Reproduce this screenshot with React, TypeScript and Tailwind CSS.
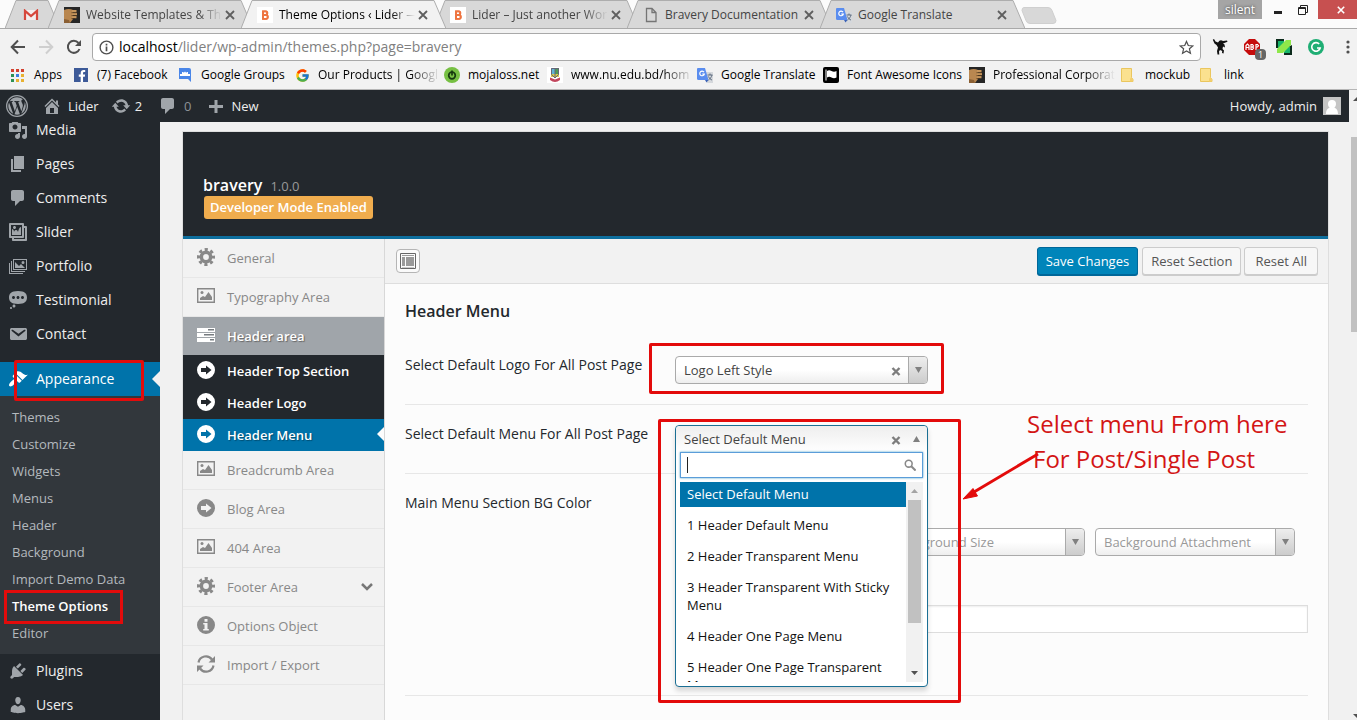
import type { ReactNode } from "react";
import { FaWordpressSimple, FaFacebookF } from "react-icons/fa";
import { FcGoogle } from "react-icons/fc";

const sans = "font-['Open_Sans','Noto_Sans',sans-serif]";

const dash = {
  media: "M13 11V4c0-.55-.45-1-1-1h-1.67L9 1H5L3.67 3H2c-.55 0-1 .45-1 1v7c0 .55.45 1 1 1h10c.55 0 1-.45 1-1zM7 4.5c1.38 0 2.5 1.12 2.5 2.5S8.38 9.5 7 9.5 4.5 8.38 4.5 7 5.62 4.5 7 4.5zM14 6h5v10.5c0 1.38-1.12 2.5-2.5 2.5S14 17.88 14 16.5s1.12-2.5 2.5-2.5c.17 0 .34.02.5.05V9h-3V6zm-4 8.05V13h2v3.5c0 1.38-1.12 2.5-2.5 2.5S7 17.88 7 16.5 8.12 14 9.5 14c.17 0 .34.02.5.05z",
  page: "M6 15V2h10v13H6zm-1 1h8v2H3V5h2v11z",
  comments: "M5 2h9c1.1 0 2 .9 2 2v7c0 1.1-.9 2-2 2h-2l-5 5v-5H5c-1.1 0-2-.9-2-2V4c0-1.1.9-2 2-2z",
  gallery: "M16 4h1.96c.57 0 1.04.47 1.04 1.04v12.92c0 .57-.47 1.04-1.04 1.04H5.04C4.47 19 4 18.53 4 17.96V16H2.04C1.47 16 1 15.53 1 14.96V2.04C1 1.47 1.47 1 2.04 1h12.92c.57 0 1.04.47 1.04 1.04V4zM3 14h11V3H3v11zm5-8.5C8 4.67 7.33 4 6.5 4S5 4.67 5 5.5 5.67 7 6.5 7 8 6.33 8 5.5zm2 4.5s1-5 3-5v8H4V7c2 0 2 3 2 3s.33-2 2-2 2 2 2 2zm7 7V6h-1v8.96c0 .57-.47 1.04-1.04 1.04H6v1h11z",
  portfolio: "M5 3h14v11H5zM6 4v9h12V4zM7 12V6l4 4 2-2 4 4zM13.5 6.5a1.5 1.5 0 1 0 3 0a1.5 1.5 0 1 0-3 0zM3 5h1v10h13v1H3zM1 7h1v10h13v1H1z",
  status: "M10 1c7 0 9 2.91 9 6.5S17 14 10 14s-9-2.91-9-6.5S3 1 10 1zM5.5 9C6.33 9 7 8.33 7 7.5S6.33 6 5.5 6 4 6.67 4 7.5 4.67 9 5.5 9zM10 9c.83 0 1.5-.67 1.5-1.5S10.83 6 10 6s-1.5.67-1.5 1.5S9.17 9 10 9zm4.5 0c.83 0 1.5-.67 1.5-1.5S15.33 6 14.5 6 13 6.67 13 7.5 13.67 9 14.5 9zM6 14.5c.83 0 1.5.67 1.5 1.5s-.67 1.5-1.5 1.5-1.5-.67-1.5-1.5.67-1.5 1.5-1.5zm-3 2.5c.55 0 1 .45 1 1s-.45 1-1 1-1-.45-1-1 .45-1 1-1z",
  email: "M3.87 4h13.25C18.37 4 19 4.59 19 5.79v8.42c0 1.19-.63 1.79-1.88 1.79H3.87c-1.25 0-1.88-.6-1.88-1.79V5.79c0-1.2.63-1.79 1.88-1.79zm6.62 8.6l6.74-5.53c.24-.2.43-.66.13-1.07-.29-.41-.82-.42-1.17-.17l-5.7 3.86L4.8 5.83c-.35-.25-.88-.24-1.17.17-.3.41-.11.87.13 1.07z",
  appearance: "M14.48 11.06L7.41 3.99l1.5-1.5c.5-.56 2.3-.47 3.51.32 1.21.8 1.43 1.28 2.91 2.1 1.18.64 2.45 1.26 4.45.85zm-.71.71L6.7 4.7 4.93 6.47c-.39.39-.39 1.02 0 1.41l1.06 1.06c.39.39.39 1.03 0 1.42-.6.6-1.43 1.11-2.21 1.69-.35.26-.7.53-1.01.84C1.43 14.23.4 16.08 1.4 17.07c.99 1 2.84-.03 4.18-1.36.31-.31.58-.66.85-1.02.57-.78 1.08-1.61 1.69-2.21.39-.39 1.02-.39 1.41 0l1.06 1.06c.39.39 1.02.39 1.41 0z",
  plugins: "M13.11 4.36L9.87 7.6 8 5.73l3.24-3.24c.35-.34 1.05-.2 1.56.32.52.51.66 1.21.31 1.55zm-8 1.77l.91-1.12 9.01 9.01-1.19.84c-.71.71-2.63 1.16-3.82 1.16H6.14L4.9 17.26c-.59.59-1.54.59-2.12 0-.59-.58-.59-1.53 0-2.12l1.24-1.24v-3.88c0-1.13.4-3.19 1.09-3.89zm7.26 3.97l3.24-3.24c.34-.35 1.04-.21 1.55.31.52.51.66 1.21.31 1.55l-3.24 3.25z",
  users: "M10 9.25c-2.27 0-2.73-3.44-2.73-3.44C7 4.02 7.82 2 9.97 2c2.16 0 2.98 2.02 2.71 3.81 0 0-.41 3.44-2.68 3.44zm0 2.57L12.72 10c2.39 0 4.52 2.33 4.52 4.53v2.49s-3.65 1.13-7.24 1.13c-3.65 0-7.24-1.13-7.24-1.13v-2.49c0-2.25 1.94-4.48 4.47-4.48z",
  home: "M16 8.5l1.53 1.53-1.06 1.06L10 4.6l-6.47 6.49-1.06-1.06L10 2.5l4 4v-2h2v4zm-6-2.46l6 5.99V18H4v-5.97zM12 17v-5H8v5h4z",
  update: "M10.2 3.28c3.53 0 6.43 2.61 6.92 6h2.08l-3.5 4-3.5-4h2.32c-.45-1.97-2.21-3.45-4.32-3.45-1.45 0-2.73.71-3.54 1.78L4.95 5.66C6.23 4.2 8.11 3.28 10.2 3.28zm-.4 13.44c-3.52 0-6.43-2.61-6.92-6H.8l3.5-4c1.17 1.33 2.33 2.67 3.5 4H5.48c.45 1.97 2.21 3.45 4.32 3.45 1.45 0 2.73-.71 3.54-1.78l1.71 1.95c-1.28 1.46-3.15 2.38-5.25 2.38z",
  plus: "M17 9v3h-5.500v5h-3v-5H3V9h5.500V4h3v5z",
};

function Dash({ d, className = "" }: { d: string; className?: string }) {
  return (
    <svg viewBox="0 0 20 20" className={`size-5 shrink-0 fill-current ${className}`} aria-hidden="true">
      <path fillRule="evenodd" d={d} />
    </svg>
  );
}

/* ---------- favicons ---------- */

function ThumbIcon() {
  return (
    <svg viewBox="0 0 16 16" className="size-4 shrink-0" aria-hidden="true">
      <path fill="#262626" d="M0 0h16v16H0z" />
      <path fill="#b98750" d="M0 3q5-2 9 0v9l-3 4H0z" />
      <path fill="#c6955c" d="M8 3h4.500v2.500H8zM8 6h5v2.300H8zM8 9h4.500v2.200H8z" />
      <path fill="#8a5f33" d="M0 12l5 1 1 3H0z" />
      <path stroke="#4b3117" strokeWidth=".7" fill="none" d="M7.500 5.700H13M7.500 8.600H13M7.500 11.500H11" />
    </svg>
  );
}

function BraveryIcon() {
  return (
    <svg viewBox="0 0 16 16" className="size-4 shrink-0" aria-hidden="true">
      <path fill="#fff" d="M0 0h16v16H0z" />
      <path fill="none" stroke="#ee7440" strokeWidth="1.800" d="M6 8h3.500M6 4.300h3a1.500 1.500 0 0 1 1.300 1.800Q10 8 9 8q1.800 0 1.700 2T9 11.900H6zV12" />
      <path fill="none" stroke="#ee7440" strokeWidth="1.800" d="M6 4.300h2.500q1.800 0 1.800 1.800T8.500 8H6h3q1.800 0 1.800 2T9 11.800H6z" />
    </svg>
  );
}

function PageIcon() {
  return (
    <svg viewBox="0 0 16 16" className="size-4 shrink-0" fill="none" stroke="#757575" strokeWidth="1.300" aria-hidden="true">
      <path d="M3.500 1.500h5.500l4 4v9H3.500zM9 1.500v4h4" />
    </svg>
  );
}

function TranslateIcon() {
  return (
    <svg viewBox="0 0 16 16" className="size-4 shrink-0" aria-hidden="true">
      <path fill="#d5d8dc" d="M8 5h8v11h-6z" />
      <path fill="#5a8def" d="M1 1h7l3.500 12H1.500A1.500 1.500 0 0 1 0 11.500V2a1 1 0 0 1 1-1z" />
      <path fill="#3a62b8" d="M8 13h3.500L9.500 15.500z" />
      <path fill="none" stroke="#fff" strokeWidth="1.200" d="M7 5.200A2.300 2.300 0 1 0 7.300 7H5.200" />
      <path fill="none" stroke="#5f6d80" d="M10.500 8h5M13 6.500V8m2 0c-.5 2-2 4-3.500 5M11.500 9.500c1 2 2 3 3.500 3.500" />
    </svg>
  );
}

function GmailIcon() {
  return (
    <svg viewBox="0 0 16 12" className="h-3 w-4" aria-hidden="true">
      <path fill="#f3eeee" d="M1 1h14v10H1z" />
      <path fill="none" stroke="#d6473c" strokeWidth="2.200" d="M2 11V1.800L8 7l6-5.200V11" />
    </svg>
  );
}

/* ---------- browser chrome ---------- */

function TabShape({ active, small }: { active?: boolean; small?: boolean }) {
  return (
    <svg className={small ? "absolute left-0 top-0 h-7 w-14" : "absolute left-0 top-0 h-7 w-[205px]"} aria-hidden="true">
      <path
        d={small ? "M0 28.500L11 .5H43L55 28.500" : "M0 28.500L11 .5H193L205 28.500"}
        fill={active ? "#f2f2f2" : "#d8d8d8"}
        stroke="#adadad"
      />
    </svg>
  );
}

function Tab({ icon, title, active, faded }: { icon: ReactNode; title: string; active?: boolean; faded?: boolean }) {
  return (
    <div className={`relative h-7 w-[193px] shrink-0 ${active ? "z-10" : ""}`}>
      <TabShape active={active} />
      <div className={`relative flex h-full w-[193px] items-center pl-4 pt-0.5 text-xs ${active ? "text-black" : "text-[#444]"}`}>
        {icon}
        <span
          className={`ml-1.5 w-[136px] whitespace-nowrap ${
            faded ? "overflow-hidden [mask-image:linear-gradient(to_right,#000_112px,transparent)]" : ""
          }`}
        >
          {title}
        </span>
        <button aria-label="Close tab" className="flex size-4 items-center justify-center">
          <svg viewBox="0 0 10 10" className="size-2.5" stroke="#5f5f5f" strokeWidth="1.800" aria-hidden="true">
            <path d="M1 1l8 8M9 1L1 9" />
          </svg>
        </button>
      </div>
    </div>
  );
}

function TabStrip() {
  return (
    <div className="flex h-[29px] shrink-0 items-start border-b border-[#a9a9a9] bg-[#fbfbfb] pl-[5px]">
      <div className="relative h-7 w-[43px] shrink-0">
        <TabShape small />
        <div className="relative flex h-full w-[52px] items-center justify-center pt-0.5">
          <GmailIcon />
        </div>
      </div>
      <Tab icon={<ThumbIcon />} title="Website Templates & Th" faded />
      <Tab icon={<BraveryIcon />} title="Theme Options ‹ Lider —" active faded />
      <Tab icon={<BraveryIcon />} title="Lider – Just another Wor" faded />
      <Tab icon={<PageIcon />} title="Bravery Documentation" />
      <Tab icon={<TranslateIcon />} title="Google Translate" />
      <button aria-label="New tab" className="ml-2 mt-[7px]">
        <svg viewBox="0 0 36 17" className="h-[17px] w-9" aria-hidden="true">
          <path d="M3 .5h24q3 0 4 3l4 10q0 3-3 3H9q-3 0-4-3L1 3.500Q1 .5 3 .5z" fill="#d8d8d8" stroke="#cfcfcf" />
        </svg>
      </button>
      <div className="ml-auto flex h-[19px] items-stretch">
        <span className="flex w-11 items-center justify-center bg-[#a5a5a5] text-xs text-white [text-shadow:0_0_3px_#333]">silent</span>
        <button aria-label="Minimize" className="flex w-8 items-center justify-center">
          <span className="mt-1.5 h-[3px] w-2 bg-[#222]" />
        </button>
        <button aria-label="Restore" className="flex w-6 items-center justify-start">
          <svg viewBox="0 0 10 10" className="ml-1 size-2.5" fill="none" stroke="#222" aria-hidden="true">
            <path d="M2.500 2V.5h7v7H8M.5 2.500h7v7h-7zM.5 3.500h7" />
          </svg>
        </button>
        <button aria-label="Close window" className="flex w-[39px] items-center justify-center bg-[#c75050]">
          <svg viewBox="0 0 10 10" className="ml-1.5 size-2" stroke="#fff" strokeWidth="2" aria-hidden="true">
            <path d="M1 1l8 8M9 1L1 9" />
          </svg>
        </button>
      </div>
    </div>
  );
}

function Toolbar() {
  return (
    <div className="flex h-8 shrink-0 items-center bg-[#f2f2f2] pt-1">
      <div className="flex w-[92px] items-center gap-3 pl-2.5">
        <button aria-label="Back">
          <svg viewBox="0 0 16 16" className="size-4" fill="none" stroke="#4f4f4f" strokeWidth="2" aria-hidden="true">
            <path d="M15 8H2M8 1.500L1.700 8 8 14.500" />
          </svg>
        </button>
        <button aria-label="Forward">
          <svg viewBox="0 0 16 16" className="size-4" fill="none" stroke="#cfcfcf" strokeWidth="2" aria-hidden="true">
            <path d="M1 8h13M8 1.500L14.300 8 8 14.500" />
          </svg>
        </button>
        <button aria-label="Reload">
          <svg viewBox="0 0 16 16" className="size-4" fill="none" stroke="#4f4f4f" strokeWidth="2" aria-hidden="true">
            <path d="M13.500 10A6 6 0 1 1 12.500 4" />
            <path d="M15 1v6H9z" fill="#4f4f4f" stroke="none" />
          </svg>
        </button>
      </div>
      <div className="flex h-7 flex-1 items-center rounded-sm border border-[#a9a9a9] bg-white px-1.5">
        <svg viewBox="0 0 16 16" className="size-[15px]" fill="none" stroke="#4f4f4f" strokeWidth="1.500" aria-hidden="true">
          <circle cx="8" cy="8" r="6.800" />
          <path d="M8 7v5M8 4v1.800" strokeWidth="1.800" />
        </svg>
        <div className="ml-[5px] flex-1 text-sm text-[#808080]">
          <span className="text-black">localhost</span>/lider/wp-admin/themes.php?page=bravery
        </div>
        <button aria-label="Bookmark this page">
          <svg viewBox="0 0 16 16" className="size-[15px]" fill="none" stroke="#4f4f4f" strokeWidth="1.300" aria-hidden="true">
            <path d="M8 1.500l1.900 4.400 4.800.4-3.600 3.100 1.100 4.700L8 11.600l-4.200 2.500 1.100-4.700L1.300 6.300l4.800-.4z" />
          </svg>
        </button>
      </div>
      <div className="flex w-[156px] items-center gap-4 pl-[11px]">
        <svg viewBox="0 0 16 16" className="size-4 shrink-0" aria-hidden="true">
          <path fill="#111" d="M2 0l1.500 2.500L6 3.500Q8 0 11 2l4-.5.5 1.300-4.500 1.700 1.500 1 .5 3-2-1-.5 2.500 1.500 1.500-.5 3-1.500-.5.2-2L8 11l-1 1.500.3 3H5.500L5 12l1-3.500L4.500 6 2.500 4.500.8.800z" />
        </svg>
        <span className="relative size-4 shrink-0">
          <svg viewBox="0 0 16 16" className="size-4" aria-hidden="true">
            <path fill="#c50b0b" d="M5 0h6l5 5v6l-5 5H5l-5-5V5z" />
            <path fill="none" stroke="#fff" strokeWidth="1.200" d="M2 11V6.500L3.500 5 5 6.500V11M2 8.500h3M7 5v5.500h1.500L9.500 9 8.500 8 9.500 7 8.500 5.500H7M7 8h2M12 11V5.500h1.500l1 1.300-1 1.200H12" />
          </svg>
          <span className="absolute left-[11px] top-2.5 flex h-[11px] w-[11px] items-center justify-center rounded-sm bg-[#666] text-[9px] text-white">1</span>
        </span>
        <svg viewBox="0 0 16 16" className="size-4 shrink-0" aria-hidden="true">
          <path fill="#0c2b1c" d="M0 0h8v4L4 9H0zM8 16h8V6l-4 2-4 6z" />
          <path fill="#17b56a" d="M2 2h6v7H2zM9 8h5v6H8z" />
          <path fill="#8fe84a" d="M10 1h5v5L7 14H1v-4z" />
        </svg>
        <svg viewBox="0 0 16 16" className="size-4 shrink-0" aria-hidden="true">
          <circle cx="8" cy="8" r="8" fill="#1fae74" />
          <path fill="none" stroke="#fff" strokeWidth="1.600" d="M11.200 5A4.300 4.300 0 1 0 12.200 9H9" />
        </svg>
        <button aria-label="Menu" className="shrink-0">
          <svg viewBox="0 0 16 16" className="size-4 fill-[#4f4f4f]" aria-hidden="true">
            <circle cx="8" cy="3" r="1.600" />
            <circle cx="8" cy="8" r="1.600" />
            <circle cx="8" cy="13" r="1.600" />
          </svg>
        </button>
      </div>
    </div>
  );
}

function FolderIcon() {
  return (
    <svg viewBox="0 0 16 16" className="size-4 shrink-0" aria-hidden="true">
      <path d="M.5 1.500h10v9l1.500 2v2H.5z" fill="#fbe18f" stroke="#eac65e" />
      <path d="M9 14.500v-3l1.500-1.500 1.500 2.500v2z" fill="#f3cf6d" />
    </svg>
  );
}

const bookmarks: { title: string; icon: ReactNode; faded?: boolean }[] = [
  {
    title: "Apps",
    icon: (
      <svg viewBox="0 0 14 14" className="mr-px size-3.5 shrink-0" aria-hidden="true">
        <path fill="#d3412f" d="M0 1h3v3H0zM5 1h3v3H5zM10 1h3v3h-3z" />
        <path fill="#2d9154" d="M0 6h3v3H0zM0 11h3v3H0z" />
        <path fill="#3d7fe0" d="M5 6h3v3H5z" />
        <path fill="#e8b130" d="M10 6h3v3h-3zM5 11h3v3H5zM10 11h3v3h-3z" />
      </svg>
    ),
  },
  {
    title: "(7) Facebook",
    icon: (
      <span className="mr-px flex size-3.5 shrink-0 items-end justify-end bg-[#3d5a98] text-white">
        <FaFacebookF className="size-3" />
      </span>
    ),
  },
  {
    title: "Google Groups",
    icon: (
      <svg viewBox="2 0 14 16" className="h-4 w-3.5 shrink-0" aria-hidden="true">
        <path fill="#4a86e8" d="M2 1h10a2 2 0 0 1 2 2v12l-3-3H2z" />
        <path fill="#fff" d="M3 9V7h2V5h1.500v1L8 4.500 9.500 6V5H11v2h2v2z" />
      </svg>
    ),
  },
  { title: "Our Products | Googl", icon: <FcGoogle className="size-[15px] shrink-0" />, faded: true },
  {
    title: "mojaloss.net",
    icon: (
      <svg viewBox="0 0 16 16" className="size-4 shrink-0" aria-hidden="true">
        <circle cx="8" cy="8" r="8" fill="#77c043" />
        <circle cx="8" cy="8.500" r="3.300" fill="none" stroke="#173a10" strokeWidth="1.700" />
        <path d="M8 3.500v5" stroke="#173a10" strokeWidth="1.700" />
      </svg>
    ),
  },
  {
    title: "www.nu.edu.bd/hom",
    faded: true,
    icon: (
      <svg viewBox="0 0 16 16" className="size-4 shrink-0" aria-hidden="true">
        <path fill="#fff" d="M0 0h16v16H0z" />
        <path fill="#62b4d8" d="M4 1h4v6H4z" />
        <path fill="#4f9a57" d="M8 1h4v6H8z" />
        <path fill="#d9c64c" d="M4 7h8v3H4z" />
        <path fill="none" stroke="#667" d="M4.500 1.500h7v6L8 11 4.500 7.500zM8 1v9" />
        <path fill="#c2465d" d="M3 10.500l5 2 5-2v2.500q-5 4-10 0z" />
      </svg>
    ),
  },
  { title: "Google Translate", icon: <TranslateIcon /> },
  {
    title: "Font Awesome Icons",
    icon: (
      <svg viewBox="0 0 16 16" className="size-4 shrink-0" aria-hidden="true">
        <rect width="16" height="16" rx="2" />
        <path d="M3 2.500v11" stroke="#fff" />
        <path fill="#fff" d="M4 4q2-1.500 4.500 0T13.500 4v6.500q-2.500 1.500-5 0T4 10.500z" />
      </svg>
    ),
  },
  { title: "Professional Corporat", icon: <ThumbIcon />, faded: true },
  { title: "mockub", icon: <FolderIcon /> },
  { title: "link", icon: <FolderIcon /> },
];

function BookmarkBar() {
  return (
    <nav
      aria-label="Bookmarks"
      className="grid h-[29px] shrink-0 grid-cols-[63px_105px_116px_149px_103px_150px_126px_146px_152px_79px_60px] items-center border-b border-[#b6b6b6] bg-[#f2f2f2] pl-[11px] text-xs text-black"
    >
      {bookmarks.map((b) => (
        <a key={b.title} href="#" className="flex items-center gap-2 whitespace-nowrap">
          {b.icon}
          <span className={b.faded ? "[mask-image:linear-gradient(to_right,#000_92px,transparent_122px)]" : ""}>{b.title}</span>
        </a>
      ))}
    </nav>
  );
}

/* ---------- WordPress admin ---------- */

function AdminBar() {
  return (
    <header className="flex h-8 shrink-0 items-center bg-[#23282d] pl-1.5 pr-2 text-[13px] text-[#eee]">
      <a href="#" aria-label="WordPress" className="flex size-[22px] items-center justify-center rounded-full bg-[#9ea3a8] text-[#23282d]">
        <FaWordpressSimple className="size-5" />
      </a>
      <a href="#" className="ml-3.5 flex items-center gap-1.5">
        <Dash d={dash.home} className="text-[#a0a5aa]" />
        <span className="pt-0.5">Lider</span>
      </a>
      <a href="#" className="ml-3 flex items-center gap-1">
        <Dash d={dash.update} className="text-[#a0a5aa]" />
        <span className="pt-0.5">2</span>
      </a>
      <a href="#" className="ml-4 flex items-center gap-1.5 text-[#8d9297]">
        <Dash d={dash.comments} className="text-[#a0a5aa]" />
        <span className="pt-0.5">0</span>
      </a>
      <a href="#" className="ml-3.5 flex items-center gap-1.5">
        <Dash d={dash.plus} className="text-[#a0a5aa]" />
        <span className="pt-0.5">New</span>
      </a>
      <a href="#" className="ml-auto flex items-center gap-1.5">
        <span className="pt-0.5">Howdy, admin</span>
        <svg viewBox="0 0 18 18" className="size-[18px]" aria-hidden="true">
          <path fill="#c5c5c5" d="M0 0h18v18H0z" />
          <path fill="#fff" d="M9 3a4 4 0 0 1 4 4c0 1.500-.7 3-1.700 3.700C13.500 11.500 15 13 15 17H3c0-4 1.500-5.500 3.700-6.300C5.700 10 5 8.500 5 7a4 4 0 0 1 4-4z" />
        </svg>
      </a>
    </header>
  );
}

function SideItem({ icon, label }: { icon: string; label: string }) {
  return (
    <a href="#" className="flex h-[34px] items-center gap-2 pl-2 text-sm text-[#eee]">
      <Dash d={icon} className="text-[#a0a5aa]" />
      {label}
    </a>
  );
}

const subItems = ["Themes", "Customize", "Widgets", "Menus", "Header", "Background", "Import Demo Data", "Theme Options", "Editor"];

function AdminSidebar() {
  return (
    <nav aria-label="Admin menu" className="w-40 shrink-0 overflow-hidden bg-[#23282d]">
      <div className="-mt-[9px]">
        <SideItem icon={dash.media} label="Media" />
        <SideItem icon={dash.page} label="Pages" />
        <SideItem icon={dash.comments} label="Comments" />
        <SideItem icon={dash.gallery} label="Slider" />
        <SideItem icon={dash.portfolio} label="Portfolio" />
        <SideItem icon={dash.status} label="Testimonial" />
        <SideItem icon={dash.email} label="Contact" />
        <a href="#" className="mt-[11px] flex h-[34px] items-center gap-2 bg-[#0073aa] pl-2 text-sm text-white">
          <Dash d={dash.appearance} />
          Appearance
          <svg viewBox="0 0 8 16" className="ml-auto h-4 w-2 fill-[#f1f1f1]" aria-hidden="true">
            <path d="M8 0v16L0 8z" />
          </svg>
        </a>
        <ul className="bg-[#32373c] pb-[7px] pt-2 text-[13px] text-[#b4b9be]">
          {subItems.map((s) => (
            <li key={s}>
              <a href="#" className={`flex h-[27px] items-center pl-3 ${s === "Theme Options" ? "font-semibold text-white" : ""}`}>
                {s}
              </a>
            </li>
          ))}
        </ul>
        <SideItem icon={dash.plugins} label="Plugins" />
        <SideItem icon={dash.users} label="Users" />
      </div>
    </nav>
  );
}

function PictureIcon() {
  return (
    <svg viewBox="0 0 18 18" className="size-[18px] shrink-0" aria-hidden="true">
      <path fill="none" stroke="currentColor" d="M.7 1.700h16.600v13.600H.7z" strokeWidth="1.400" />
      <path fill="currentColor" d="M3 13v-2l3-2 2 1 3.500-5 3.500 5v3z" />
      <circle cx="5" cy="5.500" r="1.500" fill="currentColor" />
    </svg>
  );
}

function GearIcon() {
  return (
    <svg viewBox="0 0 18 18" className="size-[18px] shrink-0" fill="none" stroke="currentColor" aria-hidden="true">
      <circle cx="9" cy="9" r="4.700" strokeWidth="3.600" />
      <circle cx="9" cy="9" r="7.500" strokeWidth="3" strokeDasharray="3.140 2.750" strokeDashoffset="1.570" />
    </svg>
  );
}

function InfoIcon() {
  return (
    <svg viewBox="0 0 18 18" className="size-[18px] shrink-0 fill-current" aria-hidden="true">
      <path fillRule="evenodd" d="M9 0a9 9 0 1 1 0 18A9 9 0 0 1 9 0zM7.500 3v2.800h3V3zM6.200 7v1.500h1.300v4.500H6.200v1.500h5.600V13h-1.300V7z" />
    </svg>
  );
}

function ArrowCircle() {
  return (
    <svg viewBox="0 0 18 18" className="size-[18px] shrink-0 fill-current" aria-hidden="true">
      <path fillRule="evenodd" d="M9 0a9 9 0 1 1 0 18A9 9 0 0 1 9 0zM4 7v4h5v2.500L14.500 9 9 4.500V7z" />
    </svg>
  );
}

function ListIcon() {
  return (
    <svg viewBox="0 0 18 16" className="h-4 w-[18px] shrink-0" aria-hidden="true">
      <path fill="#fff" d="M0 1h18v4H0zM0 6h18v4H0zM0 11h18v4H0z" />
      <path fill="#777c80" d="M11 2h6v1.500h-6zM7 7h10v1.500H7zM13 12h4v1.500h-4z" />
    </svg>
  );
}

function SyncIcon() {
  return (
    <svg viewBox="0 0 18 18" className="size-[18px] shrink-0" aria-hidden="true">
      <path fill="none" stroke="currentColor" strokeWidth="2.200" d="M1.500 7.500A7.500 7.500 0 0 1 15 4.500M16.500 10.500A7.500 7.500 0 0 1 3 13.500" />
      <path fill="currentColor" d="M18 1v6.500h-6.500zM0 17v-6.500h6.500z" />
    </svg>
  );
}

function Group({ icon, label, children }: { icon: ReactNode; label: string; children?: ReactNode }) {
  return (
    <a href="#" className="flex h-[39px] items-center border-b border-[#e7e7e7] pb-0.5 pl-3.5 pr-2.5 text-[#888]">
      {icon}
      <span className="ml-3 flex-1 pt-1">{label}</span>
      {children}
    </a>
  );
}

function SubGroup({ label, active }: { label: string; active?: boolean }) {
  return (
    <a
      href="#"
      className={`flex h-8 items-center pb-0.5 pl-3.5 font-semibold text-white ${
        active ? "bg-[#0073aa] [text-shadow:1px_1px_1px_#004e73]" : "bg-[#23282d]"
      }`}
    >
      <ArrowCircle />
      <span className="ml-3 flex-1 pt-1">{label}</span>
      {active && (
        <svg viewBox="0 0 7 14" className="h-3.5 w-[7px] fill-[#fcfcfc]" aria-hidden="true">
          <path d="M7 0v14L0 7z" />
        </svg>
      )}
    </a>
  );
}

function OptionsNav() {
  return (
    <nav aria-label="Option sections" className="w-[202px] shrink-0 border-r border-[#d8d8d8] bg-[#f2f2f2] text-[13px] font-medium">
      <Group icon={<GearIcon />} label="General" />
      <Group icon={<PictureIcon />} label="Typography Area" />
      <a href="#" className="flex h-[38px] items-center bg-[#a0a5aa] pb-0.5 pl-3.5 font-semibold text-white [text-shadow:1px_1px_1px_#666]">
        <ListIcon />
        <span className="ml-3 pt-1">Header area</span>
      </a>
      <SubGroup label="Header Top Section" />
      <SubGroup label="Header Logo" />
      <SubGroup label="Header Menu" active />
      <Group icon={<PictureIcon />} label="Breadcrumb Area" />
      <Group icon={<ArrowCircle />} label="Blog Area" />
      <Group icon={<PictureIcon />} label="404 Area" />
      <Group icon={<GearIcon />} label="Footer Area">
        <svg viewBox="0 0 14 10" className="mt-0.5 h-2.5 w-3.5" fill="none" stroke="#777" strokeWidth="2.500" aria-hidden="true">
          <path d="M2 2l5 5 5-5" />
        </svg>
      </Group>
      <Group icon={<InfoIcon />} label="Options Object" />
      <Group icon={<SyncIcon />} label="Import / Export" />
    </nav>
  );
}

function ClearMark() {
  return (
    <svg viewBox="0 0 10 12" className="h-3 w-2.5" stroke="#7d7d7d" strokeWidth="2.400" aria-hidden="true">
      <path d="M1.500 4l7 7M8.500 4l-7 7" />
    </svg>
  );
}

function SelectBox({ id, label, clearable, muted, width }: { id: string; label: string; clearable?: boolean; muted?: boolean; width: string }) {
  return (
    <div className={`relative h-7 ${width}`}>
      <select
        id={id}
        aria-label={label}
        className={`h-7 w-full appearance-none rounded border border-[#aaa] bg-linear-to-b from-white from-50% to-[#eee] pl-2 pr-5 pt-0.5 text-[13px] ${muted ? "text-[#999]" : "text-[#444]"}`}
      >
        <option>{label}</option>
      </select>
      <span className="pointer-events-none absolute inset-y-px right-px flex items-center">
        {clearable && <ClearMark />}
        <span className="ml-[7px] flex h-full w-[19px] items-center justify-center rounded-r border-l border-[#aaa] bg-linear-to-b from-[#eee] to-[#ccc]">
          <svg viewBox="0 0 7 6" className="h-1.5 w-[7px] fill-[#808080]" aria-hidden="true">
            <path d="M0 0h7L3.500 6z" />
          </svg>
        </span>
      </span>
    </div>
  );
}

const menuOptions = [
  "Select Default Menu",
  "1 Header Default Menu",
  "2 Header Transparent Menu",
  "3 Header Transparent With Sticky Menu",
  "4 Header One Page Menu",
  "5 Header One Page Transparent Menu",
];

function OpenSelect() {
  return (
    <div className="relative z-10 h-7 w-[253px]">
      <div className="absolute left-0 top-0 w-full rounded border border-[#1b6f94] bg-white px-1 pb-1 shadow-[0_4px_5px_rgba(0,0,0,0.15)]">
        <div className="-mx-1 flex h-[26px] items-center rounded-t bg-linear-to-b from-[#eee] to-white pl-2 pr-[7px] text-[13px] text-[#444]">
          <span className="flex-1 pt-0.5">Select Default Menu</span>
          <button aria-label="Clear selection" className="mr-3">
            <ClearMark />
          </button>
          <svg viewBox="0 0 7 6" className="h-1.5 w-[7px] fill-[#808080]" aria-hidden="true">
            <path d="M0 6h7L3.500 0z" />
          </svg>
        </div>
        <label className="relative flex h-[26px] items-center border border-[#5b9dd9] bg-white pl-1.5 shadow-[0_0_2px_rgba(30,140,190,0.8)]">
          <span className="h-4 w-px bg-[#222]" />
          <input type="text" aria-label="Search menus" className="h-full min-w-0 flex-1 bg-transparent text-[13px] outline-none" />
          <svg viewBox="0 0 14 14" className="mr-1.5 size-3" fill="none" stroke="#888" strokeWidth="1.800" aria-hidden="true">
            <circle cx="5.500" cy="5.500" r="4" />
            <path d="M8.500 8.500l5 5" strokeWidth="2.400" />
          </svg>
        </label>
        <div className="mt-1 flex h-[200px] overflow-hidden">
          <ul role="listbox" aria-label="Menus" className="flex flex-1 flex-col gap-1.5">
            {menuOptions.map((o, i) => (
              <li
                key={o}
                role="option"
                aria-selected={i === 0}
                className={`px-[7px] pb-1 pt-[3px] text-[13px] leading-[18px] ${i === 0 ? "bg-[#0073aa] text-white" : "text-[#111]"}`}
              >
                {o}
              </li>
            ))}
          </ul>
          <div className="flex w-[17px] flex-col items-center bg-[#f1f1f1]">
            <svg viewBox="0 0 7 4" className="my-[7px] h-1 w-[7px] fill-[#a3a3a3]" aria-hidden="true">
              <path d="M0 4h7L3.500 0z" />
            </svg>
            <span className="h-[123px] w-[13px] bg-[#c1c1c1]" />
            <svg viewBox="0 0 7 4" className="mb-[7px] mt-auto h-1 w-[7px] fill-[#505050]" aria-hidden="true">
              <path d="M0 0h7L3.500 4z" />
            </svg>
          </div>
        </div>
      </div>
    </div>
  );
}

function Field({ label, htmlFor, height, children }: { label: string; htmlFor: string; height: string; children: ReactNode }) {
  return (
    <div className={`flex border-b border-[#e7e7e7] pt-5 ${height}`}>
      <label htmlFor={htmlFor} className="w-[270px] shrink-0 whitespace-nowrap text-sm font-medium leading-[18px] text-[#23282d]">
        {label}
      </label>
      {children}
    </div>
  );
}

function OptionsMain() {
  return (
    <section className="min-w-0 flex-1 bg-[#fcfcfc]">
      <div className="flex h-[45px] items-center justify-end gap-[3px] border-b border-[#dedede] bg-[#f2f2f2] pl-[11px] pr-2.5 text-[13px]">
        <button aria-label="Expand options" className="mr-auto flex size-6 items-center justify-center rounded-sm border border-[#b5b5b5] bg-[#fafafa]">
          <svg viewBox="0 0 16 16" className="size-4" aria-hidden="true">
            <path fill="none" stroke="#666" d="M.5.5h15v15H.5z" />
            <path fill="#999" d="M2 2h12v1H2zM2 4h3v9H2zM6 4h8v9H6zM2 14h12v.500H2z" />
          </svg>
        </button>
        <button className="mr-px h-7 rounded-[3px] border border-[#006799] bg-[#0085ba] px-2 pt-0.5 text-white shadow-[0_1px_0_#006799]">Save Changes</button>
        <button className="h-7 rounded-[3px] border border-[#ccc] bg-[#f7f7f7] px-2 pt-0.5 text-[#555] shadow-[0_1px_0_#ccc]">Reset Section</button>
        <button className="h-7 rounded-[3px] border border-[#ccc] bg-[#f7f7f7] px-2.5 pt-0.5 text-[#555] shadow-[0_1px_0_#ccc]">Reset All</button>
      </div>
      <div className="px-5">
        <h2 className="flex h-[52px] items-center pt-0.5 text-base font-semibold text-[#23282d]">Header Menu</h2>
        <Field label="Select Default Logo For All Post Page" htmlFor="logo" height="h-[69px]">
          <SelectBox id="logo" label="Logo Left Style" clearable width="w-[253px]" />
        </Field>
        <Field label="Select Default Menu For All Post Page" htmlFor="menu" height="h-[69px]">
          <OpenSelect />
        </Field>
        <Field label="Main Menu Section BG Color" htmlFor="bg-image" height="h-[222px]">
          <div className="flex-1 pt-[34px]">
            <div className="flex gap-2.5 pl-[210px]">
              <SelectBox id="bg-size" label="Background Size" muted width="w-[200px]" />
              <SelectBox id="bg-attachment" label="Background Attachment" muted width="w-[200px]" />
            </div>
            <input id="bg-image" type="text" className="mt-[49px] h-7 w-full border border-[#ddd] bg-white px-2 text-[13px] shadow-[inset_0_1px_2px_rgba(0,0,0,0.07)]" />
          </div>
        </Field>
      </div>
    </section>
  );
}

function OptionsPanel() {
  return (
    <main className="min-w-0 flex-1 overflow-hidden bg-[#f1f1f1] pl-[22px] pr-5 pt-[9px]">
      <div className="border border-[#dedede]">
        <div className="flex h-[107px] flex-col border-b-[3px] border-[#0e6f9e] bg-[#23282d] pl-5 pt-[43px]">
          <h1 className="flex items-baseline gap-2 text-base font-semibold leading-5 text-white">
            bravery <span className="text-[13px] font-normal text-[#999]">1.0.0</span>
          </h1>
          <span className="ml-px self-start rounded-[3px] bg-[#f0ad4e] px-1.5 text-[13px] font-semibold leading-[23px] text-white">Developer Mode Enabled</span>
        </div>
        <div className="flex min-h-[600px]">
          <OptionsNav />
          <OptionsMain />
        </div>
      </div>
    </main>
  );
}

/* ---------- annotations over the page ---------- */

function Annotations() {
  return (
    <div className="pointer-events-none absolute left-0 top-0 z-20 text-2xl leading-8 text-[#d31515]">
      <span className="absolute left-[14px] top-[360px] h-[41px] w-[130px] rounded-[2px] border-[3px] border-[#e30b0b]" />
      <span className="absolute left-[4px] top-[590px] h-[34px] w-[119px] border-[3px] border-[#e30b0b]" />
      <span className="absolute left-[649px] top-[343px] h-[51px] w-[295px] rounded-[2px] border-[3px] border-[#e30b0b]" />
      <span className="absolute left-[658px] top-[419px] h-[284px] w-[303px] rounded-[2px] border-[3px] border-[#e30b0b]" />
      <p className="absolute left-[1027px] top-[408px] whitespace-nowrap">Select menu From here</p>
      <p className="absolute left-[1033px] top-[443px] whitespace-nowrap">For Post/Single Post</p>
      <svg className="absolute left-[960px] top-[450px] h-[52px] w-[80px]" aria-hidden="true">
        <path d="M78 4L14 42" stroke="#e30b0b" strokeWidth="3" />
        <path d="M3 49L13 38.500 17.500 46z" fill="#e30b0b" stroke="#e30b0b" />
      </svg>
    </div>
  );
}

export default function App() {
  return (
    <div className={`relative flex h-screen flex-col overflow-hidden bg-[#f1f1f1] ${sans}`}>
      <TabStrip />
      <Toolbar />
      <BookmarkBar />
      <div className="flex min-h-0 flex-1">
        <div className="flex min-w-0 flex-1 flex-col">
          <AdminBar />
          <div className="flex min-h-0 flex-1">
            <AdminSidebar />
            <OptionsPanel />
          </div>
        </div>
        <div className="flex w-2 shrink-0 flex-col items-end overflow-hidden bg-[#f1f1f1] pt-[7px]">
          <svg viewBox="0 0 4 4" className="mb-9 size-1 shrink-0 fill-[#505050]" aria-hidden="true">
            <path d="M4 0v4H0z" />
          </svg>
          <span className="h-[195px] w-1.5 bg-[#c1c1c1]" />
          <svg viewBox="0 0 4 4" className="mb-0.5 mt-auto size-1 shrink-0 fill-[#505050]" aria-hidden="true">
            <path d="M0 0h4v4z" />
          </svg>
        </div>
      </div>
      <Annotations />
    </div>
  );
}
